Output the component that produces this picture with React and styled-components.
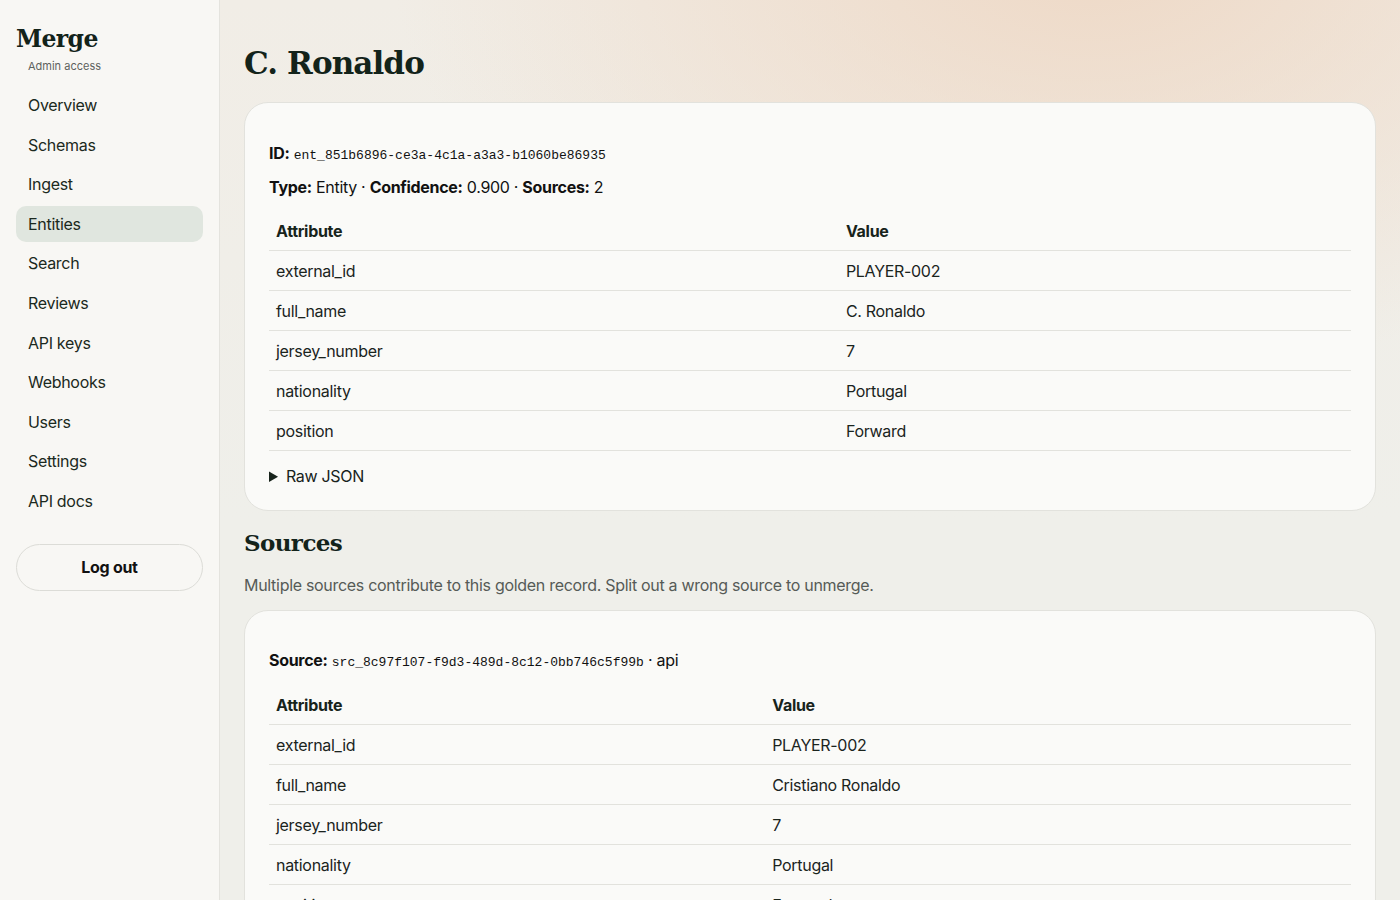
import React from 'react';
import styled, { createGlobalStyle } from 'styled-components';

const GlobalStyle = createGlobalStyle`
  html, body {
    margin: 0;
    padding: 0;
  }
  body {
    font-family: Inter, "Noto Sans", "Liberation Sans", sans-serif;
    letter-spacing: -0.3px;
    color: #17231b;
    background: #efefea;
  }
`;

const Layout = styled.div`
  display: grid;
  grid-template-columns: 220px 1fr;
  min-height: 100vh;
  background:
    radial-gradient(ellipse 700px 420px at 78% -40px, rgba(238, 216, 197, 0.95), rgba(238, 216, 197, 0) 100%),
    linear-gradient(180deg, #f1ede6 0px, #efefea 520px);
`;

const Sidebar = styled.aside`
  background: #f8f7f4;
  border-right: 1px solid #e4e3de;
  padding: 23px 16px 24px;
  display: flex;
  flex-direction: column;
  position: sticky;
  top: 0;
  height: 100vh;
  box-sizing: border-box;
`;

const Logo = styled.div`
  font-family: "DejaVu Serif", "Liberation Serif", serif;
  font-weight: 700;
  font-size: 23.5px;
  letter-spacing: -0.6px;
  line-height: 32px;
  color: #13231a;
`;

const Tagline = styled.div`
  font-size: 11px;
  letter-spacing: 0;
  color: #5e625e;
  padding-left: 12px;
  margin-top: 4px;
  line-height: 14px;
`;

const Nav = styled.nav`
  display: flex;
  flex-direction: column;
  gap: 3.6px;
  margin-top: 14px;
`;

const NavItem = styled.a`
  display: block;
  padding: 8px 12px;
  line-height: 20px;
  font-size: 16px;
  border-radius: 10px;
  color: #1b2920;
  text-decoration: none;
  background: ${p => (p.$active ? '#e0e6df' : 'transparent')};
`;

const LogoutButton = styled.button`
  margin-top: 25px;
  height: 47px;
  border-radius: 999px;
  border: 1px solid #dcdcd7;
  background: transparent;
  font-family: inherit;
  letter-spacing: -0.3px;
  font-size: 16px;
  font-weight: 700;
  color: #111;
`;

const Main = styled.main`
  padding: 24px 24px 40px;
  min-width: 0;
`;

const Title = styled.h1`
  font-family: "DejaVu Serif", "Liberation Serif", serif;
  font-size: 31px;
  font-weight: 700;
  letter-spacing: -0.9px;
  line-height: 40px;
  margin: 19px 0 19px;
  color: #13231a;
`;

const SectionTitle = styled.h2`
  font-family: "DejaVu Serif", "Liberation Serif", serif;
  font-size: 23px;
  font-weight: 700;
  letter-spacing: -0.6px;
  line-height: 30px;
  margin: 17px 0 16px;
  color: #13231a;
`;

const Lead = styled.p`
  margin: 0 0 14px;
  font-size: 16px;
  line-height: 22px;
  color: #565b57;
`;

const Card = styled.section`
  background: #fafaf8;
  border: 1px solid #e2e2dd;
  border-radius: 24px;
  padding: ${p => p.$top || 40}px 24px 24px;
`;

const Meta = styled.p`
  margin: 0 0 ${p => p.$gap || 14}px;
  font-size: 16px;
  line-height: 20px;
  color: #111;

  b {
    font-weight: 700;
  }
`;

const Mono = styled.code`
  font-family: "Liberation Mono", "DejaVu Sans Mono", monospace;
  font-size: 13px;
  line-height: 1;
  letter-spacing: 0;
`;

const Table = styled.table`
  width: 100%;
  border-collapse: collapse;
  margin-top: 14px;
  font-size: 16px;
`;

const Th = styled.th`
  text-align: left;
  font-weight: 700;
  padding: 0 7px;
  height: 39px;
  border-bottom: 1px solid #e2e2dd;
  color: #17231b;
`;

const Td = styled.td`
  padding: 0 7px;
  height: 39px;
  border-bottom: 1px solid #e2e2dd;
  color: #1a241d;
`;

const Details = styled.details`
  margin-top: 15px;
  font-size: 16px;
  line-height: 20px;

  summary {
    cursor: pointer;
  }
`;

const Stack = styled.div`
  display: flex;
  flex-direction: column;
  gap: 16px;
`;

const nav = ['Overview', 'Schemas', 'Ingest', 'Entities', 'Search', 'Reviews', 'API keys', 'Webhooks', 'Users', 'Settings', 'API docs'];

const golden = [
  ['external_id', 'PLAYER-002'],
  ['full_name', 'C. Ronaldo'],
  ['jersey_number', '7'],
  ['nationality', 'Portugal'],
  ['position', 'Forward'],
];

const sources = [
  {
    id: 'src_8c97f107-f9d3-489d-8c12-0bb746c5f99b',
    kind: 'api',
    attrs: [
      ['external_id', 'PLAYER-002'],
      ['full_name', 'Cristiano Ronaldo'],
      ['jersey_number', '7'],
      ['nationality', 'Portugal'],
      ['position', 'Forward'],
    ],
  },
  {
    id: 'src_2f41a9c0-7d1e-4b6a-9e35-c18d0a6b7e21',
    kind: 'csv',
    attrs: [
      ['external_id', 'PLAYER-002'],
      ['full_name', 'C. Ronaldo'],
      ['jersey_number', '7'],
      ['nationality', 'Portugal'],
      ['position', 'Forward'],
    ],
  },
];

const AttrTable = ({ rows }) => (
  <Table>
    <thead>
      <tr>
        <Th>Attribute</Th>
        <Th>Value</Th>
      </tr>
    </thead>
    <tbody>
      {rows.map(([k, v]) => (
        <tr key={k}>
          <Td>{k}</Td>
          <Td>{v}</Td>
        </tr>
      ))}
    </tbody>
  </Table>
);

const App = () => (
  <>
    <GlobalStyle />
    <Layout>
      <Sidebar>
        <Logo>Merge</Logo>
        <Tagline>Admin access</Tagline>
        <Nav>
          {nav.map(n => (
            <NavItem key={n} href="#" $active={n === 'Entities'}>{n}</NavItem>
          ))}
        </Nav>
        <LogoutButton>Log out</LogoutButton>
      </Sidebar>
      <Main>
        <Title>C. Ronaldo</Title>
        <Card>
          <Meta><b>ID:</b> <Mono>ent_851b6896-ce3a-4c1a-a3a3-b1060be86935</Mono></Meta>
          <Meta>
            <b>Type:</b> Entity · <b>Confidence:</b> 0.900 · <b>Sources:</b> 2
          </Meta>
          <AttrTable rows={golden} />
          <Details>
            <summary>Raw JSON</summary>
          </Details>
        </Card>
        <SectionTitle>Sources</SectionTitle>
        <Lead>Multiple sources contribute to this golden record. Split out a wrong source to unmerge.</Lead>
        <Stack>
          {sources.map(s => (
            <Card key={s.id} $top={39}>
              <Meta $gap={15}><b>Source:</b> <Mono>{s.id}</Mono> · {s.kind}</Meta>
              <AttrTable rows={s.attrs} />
            </Card>
          ))}
        </Stack>
      </Main>
    </Layout>
  </>
);

export default App;
